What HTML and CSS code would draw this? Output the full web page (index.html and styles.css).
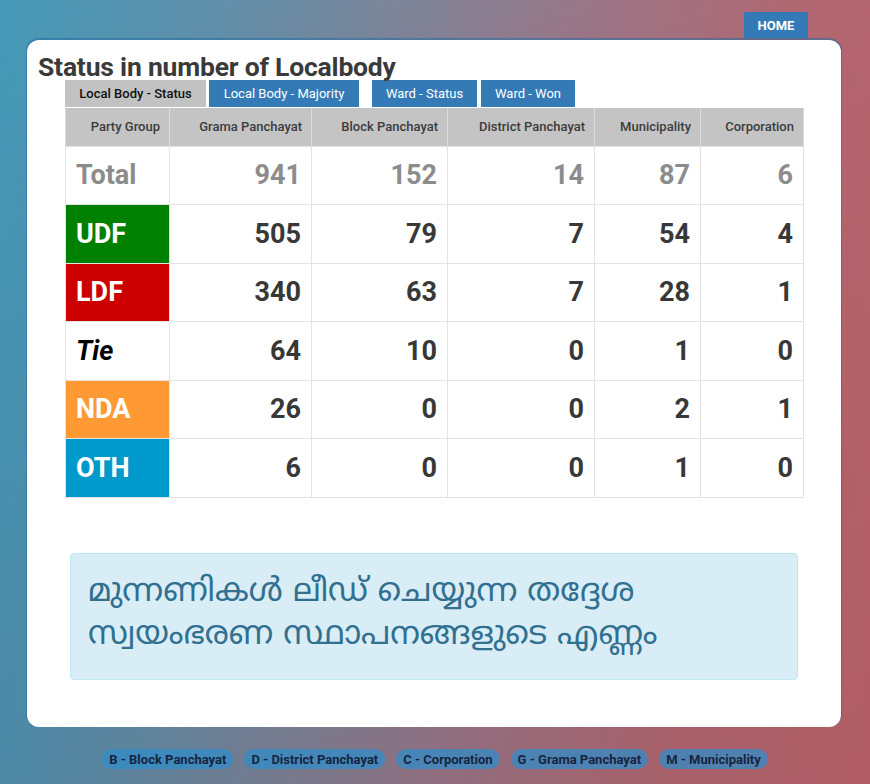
FILE: index.html
```html
<!DOCTYPE html>
<html lang="en">
<head>
<meta charset="utf-8">
<title>Status in number of Localbody</title>
<link rel="stylesheet" href="styles.css">
</head>
<body>
<div class="page">
  <div class="topbar">
    <a class="home-btn" href="#">HOME</a>
  </div>
  <main class="card">
    <h1 class="title">Status in number of Localbody</h1>
    <div class="content">
      <nav class="tabs">
        <a class="tab tab-active" href="#">Local Body - Status</a>
        <a class="tab tab-majority" href="#">Local Body - Majority</a>
        <a class="tab tab-wstatus" href="#">Ward - Status</a>
        <a class="tab tab-wwon" href="#">Ward - Won</a>
      </nav>
      <table class="status-table">
        <colgroup>
          <col class="c1"><col class="c2"><col class="c3"><col class="c4"><col class="c5"><col class="c6">
        </colgroup>
        <thead>
          <tr>
            <th>Party Group</th>
            <th>Grama Panchayat</th>
            <th>Block Panchayat</th>
            <th>District Panchayat</th>
            <th>Municipality</th>
            <th>Corporation</th>
          </tr>
        </thead>
        <tbody>
          <tr class="row-total">
            <td class="label">Total</td><td>941</td><td>152</td><td>14</td><td>87</td><td>6</td>
          </tr>
          <tr>
            <td class="label udf">UDF</td><td>505</td><td>79</td><td>7</td><td>54</td><td>4</td>
          </tr>
          <tr>
            <td class="label ldf">LDF</td><td>340</td><td>63</td><td>7</td><td>28</td><td>1</td>
          </tr>
          <tr>
            <td class="label tie">Tie</td><td>64</td><td>10</td><td>0</td><td>1</td><td>0</td>
          </tr>
          <tr>
            <td class="label nda">NDA</td><td>26</td><td>0</td><td>0</td><td>2</td><td>1</td>
          </tr>
          <tr>
            <td class="label oth">OTH</td><td>6</td><td>0</td><td>0</td><td>1</td><td>0</td>
          </tr>
        </tbody>
      </table>
    </div>
    <div class="notice">മുന്നണികൾ ലീഡ് ചെയ്യുന്ന തദ്ദേശ സ്വയംഭരണ സ്ഥാപനങ്ങളുടെ എണ്ണം</div>
  </main>
  <footer class="legend">
    <span class="badge">B - Block Panchayat</span>
    <span class="badge">D - District Panchayat</span>
    <span class="badge">C - Corporation</span>
    <span class="badge">G - Grama Panchayat</span>
    <span class="badge">M - Municipality</span>
  </footer>
</div>
</body>
</html>
```

FILE: styles.css
```css
* { box-sizing: border-box; }

html, body {
  margin: 0;
  padding: 0;
}

body {
  width: 870px;
  height: 784px;
  overflow: hidden;
  font-family: Roboto, "Noto Sans", "Noto Sans Malayalam", sans-serif;
  background:
    linear-gradient(160deg, rgba(255,255,255,0.05) 0%, rgba(0,0,0,0) 40%, rgba(0,0,0,0.06) 100%),
    linear-gradient(100deg, #3b94b4 0%, #5a8aa6 22%, #7c7f93 42%, #9a7182 60%, #b0656f 80%, #bb626c 100%);
}

.page {
  display: flex;
  flex-direction: column;
  height: 784px;
}

.topbar {
  display: flex;
  justify-content: flex-end;
  padding: 12px 62px 0 0;
  height: 40px;
}

.home-btn {
  display: flex;
  align-items: center;
  justify-content: center;
  width: 64px;
  height: 26px;
  background: #337ab7;
  color: #fff;
  font-size: 13px;
  font-weight: 700;
  text-decoration: none;
}

.card {
  margin-left: 27px;
  width: 814px;
  height: 687px;
  background: #fff;
  border-radius: 12px;
  box-shadow: 0 -1px 0 1px rgba(40, 110, 160, 0.55);
  padding: 10px 0 0 0;
  display: flex;
  flex-direction: column;
}

.title {
  margin: 0 0 0 11px;
  font-size: 26.5px;
  line-height: 30px;
  font-weight: 700;
  color: #3a3a3a;
  letter-spacing: -0.2px;
  position: relative;
  top: 2px;
}

.content {
  padding: 0 38px;
}

.tabs {
  display: flex;
  height: 27px;
}

.tab {
  display: flex;
  align-items: center;
  justify-content: center;
  height: 27px;
  font-size: 13px;
  color: #fff;
  background: #337ab7;
  text-decoration: none;
}

.tab-active {
  width: 141px;
  background: #c2c2c2;
  color: #111;
  font-weight: 500;
}

.tab-majority { width: 150px; margin-left: 3px; }
.tab-wstatus { width: 105px; margin-left: 13px; }
.tab-wwon { width: 94px; margin-left: 4px; }

.status-table {
  margin-top: 1px;
  width: 738px;
  border-collapse: collapse;
  table-layout: fixed;
}

.c1 { width: 104px; }
.c2 { width: 142px; }
.c3 { width: 136px; }
.c4 { width: 147px; }
.c5 { width: 106px; }
.c6 { width: 103px; }

.status-table th {
  height: 38px;
  background: #c4c4c4;
  color: #3c3c3c;
  font-size: 13px;
  font-weight: 500;
  text-align: right;
  padding: 0 9px 0 0;
  border-left: 1px solid #dcdcdc;
  border-right: 1px solid #dcdcdc;
}

.status-table td {
  height: 58.5px;
  padding: 0 10px 0 0;
  border: 1px solid #e3e3e3;
  text-align: right;
  font-size: 27px;
  font-weight: 700;
  color: #383838;
}

.status-table td.label {
  text-align: left;
  padding: 0 0 0 10px;
  color: #fff;
}

.row-total td,
.row-total td.label {
  color: #8c8c8c;
}

.udf { background: #008000; }
.ldf { background: #cc0000; }
.nda { background: #ff9933; }
.oth { background: #0099cc; }

.status-table td.tie {
  color: #000;
  font-style: italic;
}

.notice {
  margin: 55px 43px 0 43px;
  height: 127px;
  background: #d9edf7;
  border: 1px solid #bce8f1;
  border-radius: 4px;
  color: #31708f;
  font-family: "Noto Sans Malayalam", "Noto Sans", sans-serif;
  font-size: 32.5px;
  line-height: 43px;
  padding: 18px 18px 0 17px;
}

.legend {
  display: flex;
  justify-content: center;
  gap: 11px;
  margin-top: 22px;
}

.badge {
  display: flex;
  align-items: center;
  height: 20px;
  padding: 0 7px;
  border-radius: 10px;
  background: rgba(50, 140, 200, 0.75);
  color: #17243f;
  font-size: 13px;
  font-weight: 700;
}
```
